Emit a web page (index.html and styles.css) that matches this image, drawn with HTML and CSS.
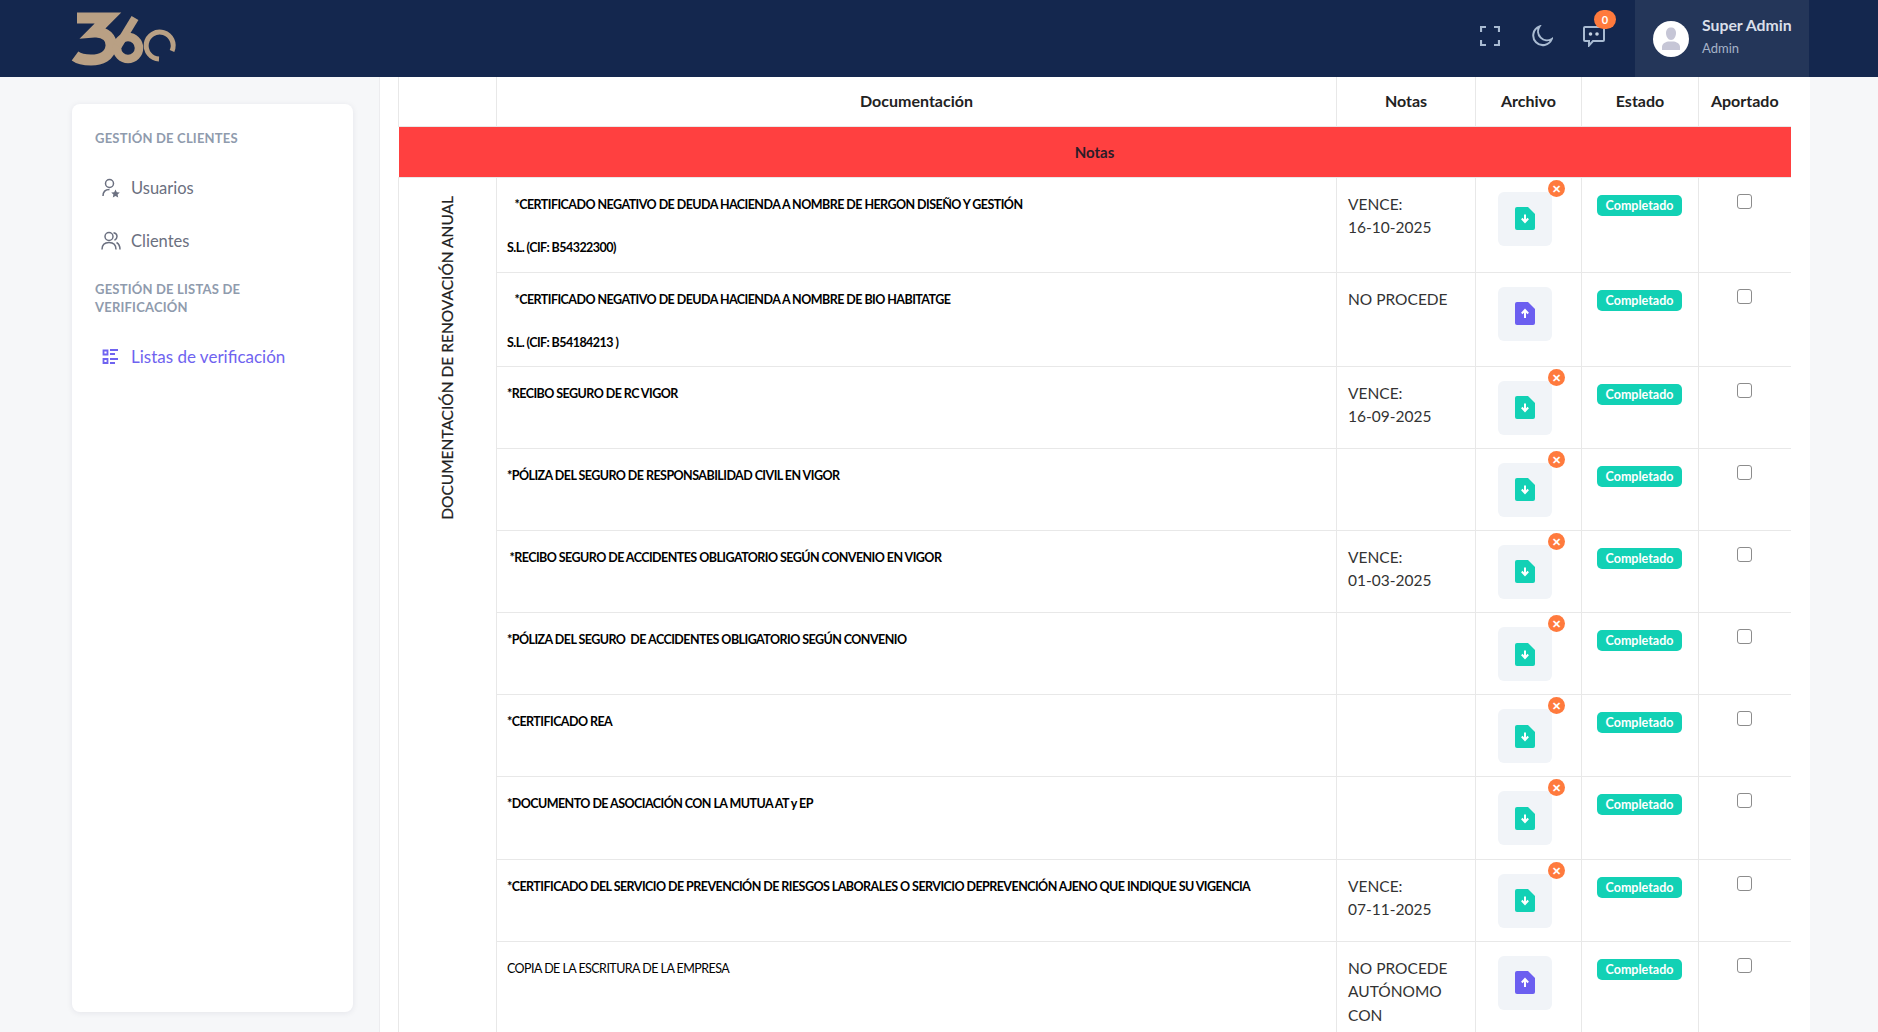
FILE: index.html
```html
<!DOCTYPE html>
<html lang="es">
<head>
    <meta charset="UTF-8">
    <meta name="viewport" content="width=device-width, initial-scale=1.0">
    <title>Listas de verificación</title>
    <link rel="stylesheet" href="styles.css">
</head>
<body>
    <!-- Shared icons -->
    <svg class="sprite" aria-hidden="true">
        <symbol id="file-down" viewBox="0 0 20 23">
            <path d="M2 0H13L20 7V21a2 2 0 0 1-2 2H2a2 2 0 0 1-2-2V2a2 2 0 0 1 2-2z" fill="#12d1b5"/>
            <path d="M10 7.5V14M6.8 11.5 10 15l3.2-3.5" fill="none" stroke="#fff" stroke-width="2"/>
        </symbol>
        <symbol id="file-up" viewBox="0 0 20 23">
            <path d="M2 0H13L20 7V21a2 2 0 0 1-2 2H2a2 2 0 0 1-2-2V2a2 2 0 0 1 2-2z" fill="#6c5ff0"/>
            <path d="M10 16V9M6.8 11.5 10 8l3.2 3.5" fill="none" stroke="#fff" stroke-width="2"/>
        </symbol>
    </svg>

    <header class="topbar">
        <svg class="logo" viewBox="0 0 110 60" width="110" height="60">
            <g fill="none" stroke="#b9a084">
                <path d="M6 9H37L23 23C35 22 41 30 40 37 39 47 30 51 20 51 13 51 8 50 4 47" stroke-width="11"/>
                <circle cx="57" cy="39" r="11" stroke-width="8.500"/>
                <path d="M47 37 64 9" stroke-width="8"/>
                <path d="M101 42A13.500 13.500 0 1 0 88 50" stroke-width="5"/>
            </g>
        </svg>

        <div class="topbar-actions">
            <svg class="top-icon" viewBox="0 0 20 20" width="20" height="20">
                <path d="M1 6V1H6M14 1H19V6M19 14V19H14M6 19H1V14" fill="none" stroke="#a9bbd2" stroke-width="2.200"/>
            </svg>
            <svg class="top-icon" viewBox="0 0 22 22" width="22" height="22">
                <path d="M8.500 1.500A9.600 9.600 0 1 0 20.800 14 9 9 0 0 1 8.500 1.500z" fill="none" stroke="#a9bbd2" stroke-width="2"/>
            </svg>
            <div class="chat">
                <svg viewBox="0 0 22 21" width="22" height="21">
                    <path d="M2 1H20a1 1 0 0 1 1 1V14a1 1 0 0 1-1 1H10L6 19.500V15H2a1 1 0 0 1-1-1V2a1 1 0 0 1 1-1z" fill="none" stroke="#a9bbd2" stroke-width="2"/>
                    <circle cx="7.500" cy="8" r="1.800" fill="#c3d0e0"/>
                    <circle cx="14" cy="8" r="1.800" fill="#c3d0e0"/>
                </svg>
                <span class="chat-count">0</span>
            </div>
            <div class="user-box">
                <div class="avatar">
                    <svg viewBox="0 0 36 36" width="36" height="36">
                        <path d="M13 12c0-3.500 2-5.500 5-5.500s5 2 5 5.500-2 7-5 7-5-3.500-5-7z" fill="#c6c6d6"/>
                        <path d="M9 29v-3c0-3 3-5 6-5.500h6c3 .5 6 2.500 6 5.500v3z" fill="#c6c6d6"/>
                    </svg>
                </div>
                <div>
                    <div class="user-name">Super Admin</div>
                    <div class="user-role">Admin</div>
                </div>
            </div>
        </div>
    </header>

    <div class="layout">
        <!-- Sidebar -->
        <aside class="sidebar">
            <nav class="side-card">
                <h4 class="side-title">Gestión de clientes</h4>
                <a class="side-link">
                    <svg viewBox="0 0 20 20" width="20" height="20">
                        <circle cx="8.500" cy="5.500" r="4" fill="none" stroke="#6b7080" stroke-width="1.500"/>
                        <path d="M2 18c0-4 2.500-6.500 6.500-6.500" fill="none" stroke="#6b7080" stroke-width="1.500"/>
                        <path d="M14.500 11.500l1.300 2.700 3 .4-2.200 2 .6 3-2.700-1.500-2.700 1.500.6-3-2.200-2 3-.4z" fill="#6b7080"/>
                    </svg>
                    Usuarios
                </a>
                <a class="side-link">
                    <svg viewBox="0 0 20 20" width="20" height="20">
                        <circle cx="8" cy="5.500" r="4" fill="none" stroke="#6b7080" stroke-width="1.500"/>
                        <path d="M1 18.500c0-4.500 2.800-7 7-7s7 2.500 7 7M12.500 1.800c2.500.5 3.500 2 3.500 3.700s-1 3-2.500 3.700M15.500 11.500c2.200 1.200 3.500 3.500 3.500 7" fill="none" stroke="#6b7080" stroke-width="1.500"/>
                    </svg>
                    Clientes
                </a>
                <h4 class="side-title">Gestión de listas de verificación</h4>
                <a class="side-link active">
                    <svg viewBox="0 0 20 20" width="20" height="20">
                        <path d="M2.500 3.500H6.500V7.500H2.500zM2.500 12H6.500V16H2.500z" fill="none" stroke="#6f63f0" stroke-width="1.800"/>
                        <path d="M9 3H17M9 7H14M9 12H17M9 16H14" fill="none" stroke="#6f63f0" stroke-width="1.800"/>
                    </svg>
                    Listas de verificación
                </a>
            </nav>
        </aside>

        <!-- Checklist table -->
        <main class="panel">
            <table class="checklist">
                <colgroup>
                    <col class="col-group">
                    <col class="col-doc">
                    <col class="col-notes">
                    <col class="col-file">
                    <col class="col-state">
                    <col class="col-given">
                </colgroup>
                <thead>
                    <tr class="head-row">
                        <th></th>
                        <th>Documentación</th>
                        <th>Notas</th>
                        <th>Archivo</th>
                        <th>Estado</th>
                        <th>Aportado</th>
                    </tr>
                </thead>
                <tbody>
                    <tr class="notes-row">
                        <td colspan="6">Notas</td>
                    </tr>
                    <tr class="row-first">
                        <td class="group-cell" rowspan="10"><span class="group-label">Documentación de renovación anual</span></td>
                        <td class="doc"><p>&nbsp;&nbsp;&nbsp;*CERTIFICADO NEGATIVO DE DEUDA HACIENDA A NOMBRE DE HERGON DISEÑO Y GESTIÓN</p><p>S.L. (CIF: B54322300)</p></td>
                        <td class="note">VENCE:<br>16-10-2025</td>
                        <td class="file-cell"><div class="file-btn"><svg class="doc-icon"><use href="#file-down"/></svg><span class="file-remove">✕</span></div></td>
                        <td><span class="badge">Completado</span></td>
                        <td class="check-cell"><input type="checkbox"></td>
                    </tr>
                    <tr class="row-double">
                        <td class="doc"><p>&nbsp;&nbsp;&nbsp;*CERTIFICADO NEGATIVO DE DEUDA HACIENDA A NOMBRE DE BIO HABITATGE</p><p>S.L. (CIF: B54184213 )</p></td>
                        <td class="note">NO PROCEDE</td>
                        <td class="file-cell"><div class="file-btn"><svg class="doc-icon"><use href="#file-up"/></svg></div></td>
                        <td><span class="badge">Completado</span></td>
                        <td class="check-cell"><input type="checkbox"></td>
                    </tr>
                    <tr class="row-single">
                        <td class="doc"><p>*RECIBO SEGURO DE RC VIGOR</p></td>
                        <td class="note">VENCE:<br>16-09-2025</td>
                        <td class="file-cell"><div class="file-btn"><svg class="doc-icon"><use href="#file-down"/></svg><span class="file-remove">✕</span></div></td>
                        <td><span class="badge">Completado</span></td>
                        <td class="check-cell"><input type="checkbox"></td>
                    </tr>
                    <tr class="row-single">
                        <td class="doc"><p>*PÓLIZA DEL SEGURO DE RESPONSABILIDAD CIVIL EN VIGOR</p></td>
                        <td class="note"></td>
                        <td class="file-cell"><div class="file-btn"><svg class="doc-icon"><use href="#file-down"/></svg><span class="file-remove">✕</span></div></td>
                        <td><span class="badge">Completado</span></td>
                        <td class="check-cell"><input type="checkbox"></td>
                    </tr>
                    <tr class="row-single">
                        <td class="doc"><p>&nbsp;*RECIBO SEGURO DE ACCIDENTES OBLIGATORIO SEGÚN CONVENIO EN VIGOR</p></td>
                        <td class="note">VENCE:<br>01-03-2025</td>
                        <td class="file-cell"><div class="file-btn"><svg class="doc-icon"><use href="#file-down"/></svg><span class="file-remove">✕</span></div></td>
                        <td><span class="badge">Completado</span></td>
                        <td class="check-cell"><input type="checkbox"></td>
                    </tr>
                    <tr class="row-single">
                        <td class="doc"><p>*PÓLIZA DEL SEGURO &nbsp;DE ACCIDENTES OBLIGATORIO SEGÚN CONVENIO</p></td>
                        <td class="note"></td>
                        <td class="file-cell"><div class="file-btn"><svg class="doc-icon"><use href="#file-down"/></svg><span class="file-remove">✕</span></div></td>
                        <td><span class="badge">Completado</span></td>
                        <td class="check-cell"><input type="checkbox"></td>
                    </tr>
                    <tr class="row-single">
                        <td class="doc"><p>*CERTIFICADO REA</p></td>
                        <td class="note"></td>
                        <td class="file-cell"><div class="file-btn"><svg class="doc-icon"><use href="#file-down"/></svg><span class="file-remove">✕</span></div></td>
                        <td><span class="badge">Completado</span></td>
                        <td class="check-cell"><input type="checkbox"></td>
                    </tr>
                    <tr class="row-single">
                        <td class="doc"><p>*DOCUMENTO DE ASOCIACIÓN CON LA MUTUA AT y EP</p></td>
                        <td class="note"></td>
                        <td class="file-cell"><div class="file-btn"><svg class="doc-icon"><use href="#file-down"/></svg><span class="file-remove">✕</span></div></td>
                        <td><span class="badge">Completado</span></td>
                        <td class="check-cell"><input type="checkbox"></td>
                    </tr>
                    <tr class="row-single">
                        <td class="doc"><p>*CERTIFICADO DEL SERVICIO DE PREVENCIÓN DE RIESGOS LABORALES O SERVICIO DEPREVENCIÓN AJENO QUE INDIQUE SU VIGENCIA</p></td>
                        <td class="note">VENCE:<br>07-11-2025</td>
                        <td class="file-cell"><div class="file-btn"><svg class="doc-icon"><use href="#file-down"/></svg><span class="file-remove">✕</span></div></td>
                        <td><span class="badge">Completado</span></td>
                        <td class="check-cell"><input type="checkbox"></td>
                    </tr>
                    <tr class="row-last">
                        <td class="doc plain"><p>COPIA DE LA ESCRITURA DE LA EMPRESA</p></td>
                        <td class="note">NO PROCEDE<br>AUTÓNOMO<br>CON</td>
                        <td class="file-cell"><div class="file-btn"><svg class="doc-icon"><use href="#file-up"/></svg></div></td>
                        <td><span class="badge">Completado</span></td>
                        <td class="check-cell"><input type="checkbox"></td>
                    </tr>
                </tbody>
            </table>
        </main>
    </div>
</body>
</html>
```

FILE: styles.css
```css
* {
    box-sizing: border-box;
    margin: 0;
    padding: 0;
}

body {
    font-family: "Lato", "Noto Sans", sans-serif;
    height: 100vh;
    overflow: hidden;
    background-color: #f6f7f9;
    color: #222;
    display: flex;
    flex-direction: column;
}

.sprite {
    display: none;
}

/* Top bar */
.topbar {
    height: 77px;
    flex-shrink: 0;
    background-color: #14274e;
    display: flex;
    align-items: center;
    justify-content: space-between;
    padding: 0 69px 0 71px;
}

.logo {
    margin-top: 1px;
}

.topbar-actions {
    display: flex;
    align-items: center;
    height: 100%;
}

.top-icon {
    margin: 0 30px 5px 1px;
}

.chat {
    position: relative;
    width: 22px;
    height: 21px;
    margin: 0 30px 5px 0;
}

.chat-count {
    position: absolute;
    top: -16px;
    left: 11px;
    width: 22px;
    height: 19px;
    border-radius: 10px;
    background-color: #ff7a3d;
    color: #fff;
    font-size: 11px;
    font-weight: 700;
    line-height: 19px;
    text-align: center;
}

.user-box {
    width: 174px;
    height: 100%;
    background-color: #243659;
    display: flex;
    align-items: center;
    gap: 13px;
    padding-left: 18px;
}

.avatar {
    width: 36px;
    height: 36px;
    border-radius: 50%;
    background-color: #fff;
    overflow: hidden;
}

.user-name {
    color: #d9dfe9;
    font-size: 15.8px;
    font-weight: 700;
    line-height: 20px;
    margin-top: -1px;
}

.user-role {
    color: #a6b3c8;
    font-size: 13px;
    line-height: 26px;
}

/* Layout */
.layout {
    flex: 1;
    display: flex;
    min-height: 0;
}

.sidebar {
    width: 380px;
    flex-shrink: 0;
    padding: 27px 26px 20px 72px;
    border-right: 1px solid #ececef;
}

.side-card {
    height: 100%;
    background-color: #fff;
    border-radius: 8px;
    box-shadow: 0 1px 6px rgba(20, 30, 60, 0.08);
    padding: 25px 23px;
}

.side-title {
    color: #8f9bad;
    font-size: 13px;
    font-weight: 700;
    line-height: 18px;
    text-transform: uppercase;
    letter-spacing: 0.2px;
}

.side-link {
    height: 53px;
    display: flex;
    align-items: center;
    gap: 10px;
    padding-left: 6px;
    color: #6b7080;
    font-size: 16.5px;
}

.side-title + .side-link {
    margin-top: 14px;
}

.side-link + .side-title {
    margin-top: 13px;
}

.side-link.active {
    color: #6f63f0;
    font-size: 17px;
}

/* Checklist table */
.panel {
    width: 1430px;
    height: 100%;
    overflow: hidden;
    background-color: #fff;
    padding-left: 18px;
}

.checklist {
    width: 1392px;
    table-layout: fixed;
    border-collapse: collapse;
}

.col-group { width: 98px; }
.col-doc { width: 840px; }
.col-notes { width: 139px; }
.col-file { width: 106px; }
.col-state { width: 117px; }
.col-given { width: 92px; }

.checklist th,
.checklist td {
    border: 1px solid #e8e8e8;
    vertical-align: top;
}

.checklist tr > :last-child {
    border-right: none;
}

.head-row {
    height: 49px;
}

.checklist th {
    border-top: none;
    vertical-align: middle;
    padding-bottom: 2px;
    font-size: 16px;
    font-weight: 700;
    color: #222;
}

.notes-row {
    height: 50px;
}

.notes-row td {
    background-color: #ff4040;
    border: none;
    font-size: 15px;
    font-weight: 700;
    line-height: 50px;
    text-align: center;
    color: #2a1c28;
}

.row-first { height: 95px; }
.row-double { height: 94px; }
.row-single { height: 82.2px; }
.row-last { height: 120px; }

.group-cell {
    text-align: center;
    padding: 18px 2px 0 0;
}

.group-label {
    display: inline-block;
    writing-mode: vertical-rl;
    transform: rotate(180deg);
    font-size: 15.5px;
    text-transform: uppercase;
    color: #222;
    -webkit-text-stroke: 0.2px #222;
}

.doc {
    padding: 18px 10px 0;
    font-size: 12.5px;
    font-weight: 700;
    color: #000;
    letter-spacing: -0.55px;
}

.doc p {
    line-height: 18px;
}

.doc p + p {
    margin-top: 25px;
}

.doc.plain {
    font-weight: 400;
}

.note {
    padding: 15px 10px 0 11px;
    font-size: 15.5px;
    line-height: 23.5px;
    color: #333;
}

.file-cell {
    padding: 14px 0 0 22px;
}

.file-btn {
    position: relative;
    width: 54px;
    height: 54px;
    border-radius: 6px;
    background-color: #f1f4f8;
    display: flex;
    align-items: center;
    justify-content: center;
}

.doc-icon {
    width: 20px;
    height: 23px;
}

.file-remove {
    position: absolute;
    top: -12px;
    right: -13px;
    width: 17px;
    height: 17px;
    border-radius: 50%;
    background-color: #ff7a3d;
    color: #fff;
    font-size: 11px;
    font-weight: 700;
    line-height: 17px;
    text-align: center;
}

.badge {
    display: block;
    width: 85px;
    height: 21px;
    margin: 17px 0 0 15px;
    border-radius: 5px;
    background-color: #12d1b5;
    color: #fff;
    font-size: 12.5px;
    font-weight: 700;
    line-height: 21px;
    text-align: center;
}

.check-cell {
    text-align: center;
    padding-top: 15px;
}

.check-cell input {
    appearance: none;
    display: inline-block;
    width: 15px;
    height: 15px;
    border: 1.5px solid #8c8c8c;
    border-radius: 3px;
    background-color: #fff;
}
```
